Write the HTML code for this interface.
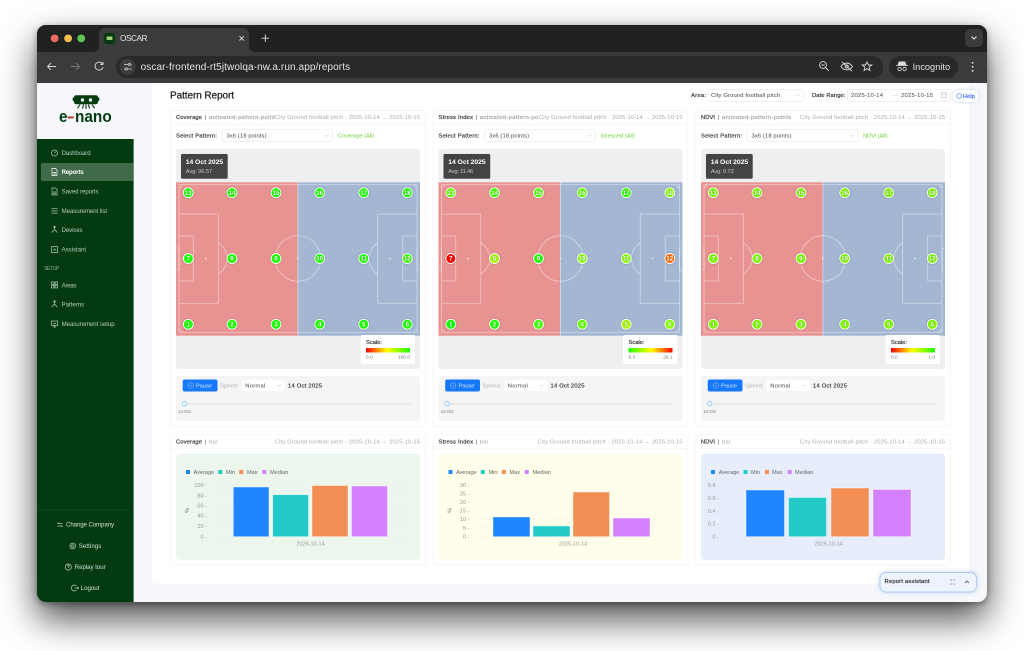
<!DOCTYPE html>
<html><head><meta charset="utf-8"><title>OSCAR</title>
<style>
html,body{margin:0;padding:0;background:#fff;width:1024px;height:651px;overflow:hidden}
#w{position:absolute;left:37px;top:25px;width:950px;height:577px;border-radius:9px;box-shadow:0 17px 36px rgba(0,0,0,.7),0 2px 7px rgba(0,0,0,.35);background:#202121}
svg{position:absolute;left:0;top:0;display:block;filter:blur(.25px)}
text{font-family:"Liberation Sans",sans-serif;font-size:5.8px;fill:#444}
.b{paint-order:stroke;stroke:#444;stroke-width:.22px}
.g{fill:#aaa}
.g.b{stroke:#aaa}
.n text{font-size:6.1px;fill:#b9ccbc}
.m text{font-size:6.1px;font-weight:bold;fill:#fff;text-anchor:middle;paint-order:stroke;stroke:rgba(0,60,0,.5);stroke-width:.4px}
.m circle{stroke:#fff;stroke-width:.9;filter:drop-shadow(0 .3px .7px rgba(0,0,0,.35))}
.ic{fill:none;stroke:#b9ccbc;stroke-width:.7}
.ax text{font-size:5.6px;fill:#999;text-anchor:end}
.lg text{font-size:5.6px;fill:#666}
</style></head><body>
<div id="w"></div>
<svg width="1024" height="651" viewBox="0 0 1024 651" xmlns="http://www.w3.org/2000/svg">
<defs>
<clipPath id="win"><rect x="37" y="25" width="950" height="577" rx="9"/></clipPath>
<linearGradient id="rg"><stop offset="0" stop-color="#f00"/><stop offset=".48" stop-color="#ff0"/><stop offset="1" stop-color="#1eff00"/></linearGradient>
<linearGradient id="gr"><stop offset="0" stop-color="#1eff00"/><stop offset=".52" stop-color="#ff0"/><stop offset="1" stop-color="#f00"/></linearGradient>
<g id="cardframe" fill="#fff">
<rect x="170.6" y="110.4" width="254.8" height="316.3" rx="3" stroke="#f2f2f2" stroke-width=".7"/>
<path d="M171 124.3H425" stroke="#f2f2f2" stroke-width=".7"/>
<rect x="222.2" y="129.5" width="110.5" height="12.2" rx="2" stroke="#e5e5e5" stroke-width=".6"/>
<path d="M325 134.7l1.8 1.9 1.8-1.9" fill="none" stroke="#bbb" stroke-width=".5"/>
<rect x="176" y="376" width="244" height="45" rx="3" fill="#f5f5f5"/>
<rect x="182.7" y="379.5" width="34.8" height="12" rx="2" fill="#1677ff"/>
<circle cx="190.7" cy="385.5" r="2.7" fill="none" stroke="#bcd8ff" stroke-width=".5"/>
<path d="M189.6 385.5h2.2" stroke="#bcd8ff" stroke-width=".5"/>
<rect x="241.7" y="380" width="43.3" height="11" rx="2"/>
<path d="M277.2 384.6l1.8 1.9 1.8-1.9" fill="none" stroke="#bbb" stroke-width=".5"/>
<rect x="184" y="403" width="227" height="1.6" rx=".8" fill="#e6e6e6"/>
<circle cx="184.6" cy="403.6" r="2.3" fill="#fff" stroke="#91caff" stroke-width="1"/>
<rect x="170.6" y="434.8" width="254.8" height="130.2" rx="3" stroke="#f2f2f2" stroke-width=".7"/>
<path d="M171 448.7H425" stroke="#f2f2f2" stroke-width=".7"/>
</g>
<g id="pitch">
<rect x="176" y="149" width="244" height="220" rx="3" fill="#efefef"/>
<rect x="176" y="182.3" width="121.7" height="153.4" fill="#e79391"/>
<rect x="297.7" y="182.3" width="122.3" height="153.4" fill="#a3b7d3"/>
<g fill="none" stroke="#fff" stroke-opacity=".5" stroke-width=".75">
<rect x="179" y="184.7" width="238" height="147.6"/>
<path d="M297.9 182.3V335.7"/>
<circle cx="297.9" cy="258.5" r="22.7"/>
<path d="M179 214H218.3V303.3H179M179 236H193.3V281H179M417 214H377.7V303.3H417M417 236H402.7V281H417"/>
<path d="M218.3 243A18 18 0 0 1 218.3 274M377.7 243A18 18 0 0 0 377.7 274"/>
<path d="M176.5 248H179V270H176.5M419.5 248H417V270H419.5"/>
<path d="M179 187.5A3 3 0 0 0 181.8 184.7M414.2 184.7A3 3 0 0 0 417 187.5M179 329.5A3 3 0 0 1 181.8 332.3M414.2 332.3A3 3 0 0 1 417 329.5"/>
</g>
<g fill="#fff" fill-opacity=".8"><circle cx="205.7" cy="258.5" r=".8"/><circle cx="390" cy="258.5" r=".8"/><circle cx="297.9" cy="258.5" r=".8"/></g>
<rect x="180.7" y="153.7" width="47.3" height="25.3" rx="1.5" fill="#444" stroke="#e8e8e8" stroke-width=".6"/>
<rect x="360.7" y="335" width="54.3" height="29" rx="1.5" fill="#fff"/>
</g>
</defs>

<g clip-path="url(#win)">
<!-- Browser chrome -->
<rect x="37" y="25" width="950" height="28" fill="#202121"/>
<circle cx="54.6" cy="38.4" r="3.9" fill="#ed6a5e"/><circle cx="68.1" cy="38.4" r="3.9" fill="#f4bf4f"/><circle cx="81.2" cy="38.4" r="3.9" fill="#61c554"/>
<path d="M92 52c5 0 7-2 7-6V34c0-4 3-6 6-6h138c3 0 6 2 6 6v12c0 4 2 6 7 6z" fill="#3a3b3b"/>
<rect x="37" y="52" width="950" height="31" fill="#3a3b3b"/>
<rect x="104" y="33" width="11" height="11" rx="3" fill="#033a10"/>
<rect x="106.5" y="36.5" width="6" height="3.5" rx="1" fill="#9fd27a"/>
<text x="120" y="41.200" style="font-size:8.300px;fill:#e4e4e4" textLength="27.5">OSCAR</text>
<path d="M239.5 36.2l4.3 4.3m0-4.3l-4.3 4.3" stroke="#ddd" stroke-width=".9"/>
<path d="M265.3 34.5v7.5m-3.7-3.8h7.4" stroke="#ddd" stroke-width=".9"/>
<rect x="965" y="29" width="18" height="18" rx="5" fill="#3a3b3b"/>
<path d="M971.6 36.6l2.4 2.4 2.4-2.4" fill="none" stroke="#eee" stroke-width="1"/>
<path d="M47.5 66.5h8.5M47.5 66.5l3.5-3.5M47.5 66.5l3.5 3.5" fill="none" stroke="#d8d8d8" stroke-width=".9"/>
<path d="M71 66.5h8.5M79.5 66.5l-3.5-3.5M79.5 66.5l-3.5 3.5" fill="none" stroke="#777" stroke-width=".9"/>
<path d="M102.5 64a4 4 0 1 0 .5 3M103 61.8v2.8h-2.8" fill="none" stroke="#d8d8d8" stroke-width=".9"/>
<rect x="116" y="56" width="767" height="22" rx="11" fill="#282929"/>
<circle cx="127.5" cy="66.8" r="8" fill="#3d3e3e"/>
<path d="M124 64.5h4.5M130.5 64.5h1M124 69h1M127.5 69h4" stroke="#ddd" stroke-width=".7"/>
<circle cx="129.5" cy="64.5" r="1.1" fill="none" stroke="#ddd" stroke-width=".7"/><circle cx="126.3" cy="69" r="1.1" fill="none" stroke="#ddd" stroke-width=".7"/>
<text x="140.6" y="70" style="font-size:10px;fill:#e3e3e3" textLength="209.5">oscar-frontend-rt5jtwolqa-nw.a.run.app/reports</text>
<g fill="none" stroke="#d8d8d8" stroke-width=".9">
<circle cx="823" cy="65" r="3.4"/><path d="M825.5 67.5l3.3 3.3M821.4 65h3.2"/>
<path d="M841 66.5c3-4.5 8.5-4.5 11.5 0-3 4.5-8.5 4.5-11.5 0zM842 61.8l10 9.5"/><circle cx="846.7" cy="66.5" r="1.6"/>
<path d="M867 62l1.4 3h3.3l-2.6 2.2.9 3.3-3-1.8-3 1.8.9-3.3-2.6-2.2h3.3z"/>
</g>
<rect x="889" y="56" width="69" height="22" rx="11" fill="#282929"/>
<path d="M898 65l1-3.2h6l1 3.2zM896 65.5h12" fill="#ddd" stroke="#ddd" stroke-width=".7"/>
<circle cx="899.6" cy="69" r="1.7" fill="none" stroke="#ddd" stroke-width=".8"/><circle cx="904.6" cy="69" r="1.7" fill="none" stroke="#ddd" stroke-width=".8"/>
<text x="912.6" y="70" style="font-size:9.200px;fill:#e3e3e3" textLength="37.5">Incognito</text>
<g fill="#ddd"><circle cx="972.6" cy="62.8" r=".95"/><circle cx="972.6" cy="66.8" r=".95"/><circle cx="972.6" cy="70.8" r=".95"/></g>

<!-- Page -->
<rect x="37" y="83" width="950" height="519" fill="#f5f7fb"/>
<rect x="37" y="139" width="96.6" height="463" fill="#033a10"/>
<rect x="152" y="83" width="817" height="500.5" rx="2" fill="#fff"/>

<!-- Logo -->
<g fill="#033a10">
<path d="M74 97.500c0-1.500 1-2.300 2-2.300h20c1 0 2 .8 2 2.300v4.500c0 1.300-1 2.200-2 2.200H76c-1 0-2-.9-2-2.200z"/>
<rect x="72.700" y="97.500" width="1.500" height="3.500"/><rect x="97.800" y="97.500" width="1.500" height="3.500"/>
<path d="M80 104.500l-2.500 3.800M83.500 104.500l-1 4M86 104.500v4.500M88.500 104.500l1 4M92 104.500l2.500 3.800" stroke="#033a10" stroke-width="1.100" fill="none"/>
</g>
<circle cx="82.500" cy="100" r="1.700" fill="#eef2ee"/><circle cx="90.500" cy="100" r="1.700" fill="#eef2ee"/>
<text x="59" y="122" style="font-size:17px;font-weight:bold;fill:#033a10" textLength="8.500" lengthAdjust="spacingAndGlyphs">e</text>
<rect x="67.700" y="116.500" width="6" height="1.900" fill="#a8352a"/>
<text x="75" y="122" style="font-size:17px;font-weight:bold;fill:#033a10" textLength="36.700" lengthAdjust="spacingAndGlyphs">nano</text>

<!-- Sidebar -->
<rect x="41" y="163" width="92.600" height="18" rx="1.500" fill="#3f6b4a"/>
<g class="n">
<text x="61.600" y="155" textLength="29">Dashboard</text>
<text x="61.600" y="174" textLength="22" style="fill:#fff;font-weight:bold">Reports</text>
<text x="61.600" y="193.500" textLength="37">Saved reports</text>
<text x="61.600" y="213" textLength="45.500">Measurement list</text>
<text x="61.600" y="232" textLength="21">Devices</text>
<text x="61.600" y="251.500" textLength="24.500">Assistant</text>
<text x="44" y="270" textLength="15.500" style="fill:#8ba98f;font-size:5.400px">SETUP</text>
<text x="61.600" y="287.500" textLength="15">Areas</text>
<text x="61.600" y="306.500" textLength="22.500">Patterns</text>
<text x="61.600" y="326" textLength="53">Measurement setup</text>
<text x="66" y="526.700" textLength="48" style="fill:#d3e0d5">Change Company</text>
<text x="78.700" y="547.900" textLength="22.600" style="fill:#d3e0d5">Settings</text>
<text x="74.700" y="569" textLength="31" style="fill:#d3e0d5">Replay tour</text>
<text x="80.700" y="590.100" textLength="18.600" style="fill:#d3e0d5">Logout</text>
</g>
<g class="ic">
<circle cx="54.500" cy="153" r="3"/><path d="M54.500 153l1.300-1.300"/>
<path d="M52 168.500h3.500l1.500 1.500v5.500h-5z" style="stroke:#fff"/><path d="M53 172.500h3M53 174h3" style="stroke:#fff"/>
<path d="M52 188h3.500l1.500 1.500v5.500h-5zM53 192h3M53 193.500h3"/>
<path d="M52 208.700h5.500M52 210.900h5.500M52 213.100h5.500M51 208.700h.5M51 210.900h.5M51 213.100h.5"/>
<path d="M54.500 226.500v3l-2.800 3M54.500 229.500l2.800 3"/><circle cx="54.500" cy="227" r=".8"/>
<rect x="51.500" y="246.500" width="6" height="6"/><path d="M53 250.500l1.500-1.500 1.500 1.500"/>
<rect x="51.500" y="282" width="2.500" height="2.500"/><rect x="55" y="282" width="2.500" height="2.500"/><rect x="51.500" y="285.500" width="2.500" height="2.500"/><rect x="55" y="285.500" width="2.500" height="2.500"/>
<path d="M54.500 301v3l-2.800 3M54.500 304l2.800 3"/><circle cx="54.500" cy="301.500" r=".8"/>
<rect x="51.300" y="321" width="6.400" height="4.500"/><path d="M54.500 325.500v1.500M53 327h3M53 323l1.500 1 1.500-1"/>
<path d="M57.500 523.500h5M58.500 522.500l-1 1M57.500 526h5M61.500 527l1-1"/>
<circle cx="72.700" cy="546" r="2.900"/><circle cx="72.700" cy="546" r="1.200"/>
<circle cx="68.300" cy="567" r="3.100"/><path d="M67.300 566.200c0-1.400 2-1.400 2 0 0 .8-1 .8-1 1.800M68.300 569v.3"/>
<path d="M76.500 585.800a3 3 0 1 0 0 4.400M74.500 588h4M77.300 586.800l1.200 1.200-1.200 1.200"/>
</g>
<path d="M37 510H133.600" stroke="#1d4d27" stroke-width=".6"/>

<!-- Header row -->
<text x="170" y="98.500" style="font-size:10px;fill:#222;stroke:#222;stroke-width:.25px" textLength="64">Pattern Report</text>
<text x="691" y="97" class="b" textLength="15">Area:</text>
<rect x="707.800" y="89.300" width="96" height="12" rx="2" fill="#fff" stroke="#e5e5e5" stroke-width=".6"/>
<text x="711" y="97.200" textLength="69">City Ground football pitch</text>
<path d="M796 94.200l1.800 1.900 1.800-1.900" fill="none" stroke="#bbb" stroke-width=".5"/>
<text x="812" y="97" class="b" textLength="33.500">Date Range:</text>
<rect x="847.500" y="89.300" width="103" height="12" rx="2" fill="#fff" stroke="#e5e5e5" stroke-width=".6"/>
<text x="851" y="97.200" textLength="32">2025-10-14</text>
<text x="901" y="97.200" textLength="32">2025-10-15</text>
<path d="M893 95.300h4l-1-.8m1 .8l-1 .8" fill="none" stroke="#ccc" stroke-width=".5"/>
<rect x="941.500" y="92.700" width="5" height="5" fill="none" stroke="#bbb" stroke-width=".5"/><path d="M941.500 94.300h5" stroke="#bbb" stroke-width=".5"/>
<rect x="953" y="90" width="26" height="12" rx="6" fill="#fff" style="filter:drop-shadow(0 .6px 1.500px rgba(60,90,180,.3))"/>
<circle cx="959" cy="96" r="2.400" fill="none" stroke="#3b6cf6" stroke-width=".6"/>
<text x="962.800" y="98" style="fill:#3b6cf6;stroke:#3b6cf6;stroke-width:.2px" textLength="12">Help</text>

<!-- Card 1 -->
<use href="#cardframe"/><use href="#pitch"/>
<g>
<text x="176" y="119" class="b" textLength="26">Coverage</text><text x="205" y="119" fill="#888">|</text>
<text x="209" y="119" class="g b" textLength="66">animated-pattern-point</text>
<text x="275" y="119" class="g" textLength="145">City Ground football pitch · 2025-10-14 → 2025-10-15</text>
<text x="176" y="137.500" class="b" textLength="41">Select Pattern:</text>
<text x="226.500" y="137.700" textLength="40">3x6 (18 points)</text>
<text x="338" y="137.500" style="fill:#73d13d" textLength="36">Coverage (All)</text>
<text x="185.700" y="164" style="font-size:6.800px;font-weight:bold;fill:#fff" textLength="37.500">14 Oct 2025</text>
<text x="185.700" y="173" style="fill:#c4c4c4" textLength="26.500">Avg: 96.57</text>
<text x="366" y="344" class="b" textLength="16">Scale:</text>
<rect x="366" y="348" width="44" height="4.500" fill="url(#rg)"/>
<text x="366" y="358.500" style="font-size:4.800px;fill:#777">0.0</text><text x="410" y="358.500" text-anchor="end" style="font-size:4.800px;fill:#777">100.0</text>
<text x="196" y="387.500" style="fill:#cfe2ff" textLength="16">Pause</text>
<text x="220" y="387.500" style="fill:#b5b5b5" textLength="19">Speed:</text>
<text x="245.300" y="387.300" textLength="20">Normal</text>
<text x="288" y="387.500" class="b" textLength="34">14 Oct 2025</text>
<text x="178.300" y="413" style="font-size:4.500px;fill:#777" textLength="12.500">14 Oct</text>
<g class="m">
<circle cx="188.300" cy="192.700" r="5" fill="#1eff00"/><text x="188.300" y="194.900">13</text>
<circle cx="232" cy="192.700" r="5" fill="#1eff00"/><text x="232" y="194.900">14</text>
<circle cx="276" cy="192.700" r="5" fill="#1eff00"/><text x="276" y="194.900">15</text>
<circle cx="319.700" cy="192.700" r="5" fill="#1eff00"/><text x="319.700" y="194.900">16</text>
<circle cx="363.700" cy="192.700" r="5" fill="#1eff00"/><text x="363.700" y="194.900">17</text>
<circle cx="407.300" cy="192.700" r="5" fill="#1eff00"/><text x="407.300" y="194.900">18</text>
<circle cx="188.300" cy="258.500" r="5" fill="#1eff00"/><text x="188.300" y="260.700">7</text>
<circle cx="232" cy="258.500" r="5" fill="#1eff00"/><text x="232" y="260.700">8</text>
<circle cx="276" cy="258.500" r="5" fill="#1eff00"/><text x="276" y="260.700">9</text>
<circle cx="319.700" cy="258.500" r="5" fill="#1eff00"/><text x="319.700" y="260.700">10</text>
<circle cx="363.700" cy="258.500" r="5" fill="#1eff00"/><text x="363.700" y="260.700">11</text>
<circle cx="407.300" cy="258.500" r="5" fill="#3dff00"/><text x="407.300" y="260.700">12</text>
<circle cx="188.300" cy="324.300" r="5" fill="#1eff00"/><text x="188.300" y="326.500">1</text>
<circle cx="232" cy="324.300" r="5" fill="#1eff00"/><text x="232" y="326.500">2</text>
<circle cx="276" cy="324.300" r="5" fill="#1eff00"/><text x="276" y="326.500">3</text>
<circle cx="319.700" cy="324.300" r="5" fill="#1eff00"/><text x="319.700" y="326.500">4</text>
<circle cx="363.700" cy="324.300" r="5" fill="#1eff00"/><text x="363.700" y="326.500">5</text>
<circle cx="407.300" cy="324.300" r="5" fill="#1eff00"/><text x="407.300" y="326.500">6</text>
</g>
<!-- Coverage bar -->
<text x="176" y="443.500" class="b" textLength="26">Coverage</text><text x="205" y="443.500" fill="#888">|</text><text x="209" y="443.500" class="g" textLength="9">bar</text>
<text x="275" y="443.500" class="g" textLength="145">City Ground football pitch · 2025-10-14 → 2025-10-15</text>
<rect x="176" y="453.700" width="244" height="106.300" rx="4" fill="#edf6ec"/>
<g class="lg">
<rect x="186" y="470" width="4" height="4" fill="#1f86ff"/><text x="193.500" y="474">Average</text>
<rect x="218.300" y="470" width="4" height="4" fill="#22cbc7"/><text x="226" y="474">Min</text>
<rect x="239.300" y="470" width="4" height="4" fill="#f38f54"/><text x="247" y="474">Max</text>
<rect x="262.300" y="470" width="4" height="4" fill="#d481ff"/><text x="270" y="474">Median</text>
</g>
<g class="ax"><text x="207" y="487">100 -</text><text x="207" y="497.300">80 -</text><text x="207" y="507.300">60 -</text><text x="207" y="517.700">40 -</text><text x="207" y="528">20 -</text><text x="207" y="538.300">0 -</text></g>
<path d="M212 485H410M212 495.300H410M212 505.300H410M212 515.700H410M212 526H410M212 536.300H410" stroke="#dfe6dd" stroke-width=".5" stroke-dasharray="1 1.500"/>
<text x="0" y="0" transform="translate(189,513) rotate(-90)" style="font-size:5.500px;fill:#666">%</text>
<g stroke="#fff" stroke-opacity=".6" stroke-width=".7">
<rect x="233.300" y="487" width="35.700" height="49.700" fill="#1f86ff"/><rect x="272.700" y="494.700" width="35.800" height="42" fill="#22cbc7"/><rect x="312" y="485.500" width="36" height="51.200" fill="#f38f54"/><rect x="351.500" y="486" width="36" height="50.700" fill="#d481ff"/>
</g>
<text x="310.500" y="545.500" text-anchor="middle" style="font-size:5.500px;fill:#999">2025-10-14</text>
</g>

<!-- Card 2 -->
<g transform="translate(262.500,0)"><use href="#cardframe"/><use href="#pitch"/>
<text x="176" y="119" class="b" textLength="34.500">Stress Index</text><text x="213" y="119" fill="#888">|</text>
<text x="217.200" y="119" class="g b" textLength="58.500">animated-pattern-po</text>
<text x="276.500" y="119" class="g" textLength="143.500">City Ground football pitch · 2025-10-14 → 2025-10-15</text>
<text x="176" y="137.500" class="b" textLength="41">Select Pattern:</text>
<text x="226.500" y="137.700" textLength="40">3x6 (18 points)</text>
<text x="338" y="137.500" style="fill:#73d13d" textLength="34.500">Stressed (All)</text>
<text x="185.700" y="164" style="font-size:6.800px;font-weight:bold;fill:#fff" textLength="37.500">14 Oct 2025</text>
<text x="185.700" y="173" style="fill:#c4c4c4" textLength="25">Avg: 11.46</text>
<text x="366" y="344" class="b" textLength="16">Scale:</text>
<rect x="366" y="348" width="44" height="4.500" fill="url(#gr)"/>
<text x="366" y="358.500" style="font-size:4.800px;fill:#777">6.3</text><text x="410" y="358.500" text-anchor="end" style="font-size:4.800px;fill:#777">26.1</text>
<text x="196" y="387.500" style="fill:#cfe2ff" textLength="16">Pause</text>
<text x="220" y="387.500" style="fill:#b5b5b5" textLength="19">Speed:</text>
<text x="245.300" y="387.300" textLength="20">Normal</text>
<text x="288" y="387.500" class="b" textLength="34">14 Oct 2025</text>
<text x="178.300" y="413" style="font-size:4.500px;fill:#777" textLength="12.500">14 Oct</text>
<g class="m">
<circle cx="188.300" cy="192.700" r="5" fill="#66ff00"/><text x="188.300" y="194.900">13</text>
<circle cx="232" cy="192.700" r="5" fill="#44ff00"/><text x="232" y="194.900">14</text>
<circle cx="276" cy="192.700" r="5" fill="#55ff00"/><text x="276" y="194.900">15</text>
<circle cx="319.700" cy="192.700" r="5" fill="#66ff00"/><text x="319.700" y="194.900">16</text>
<circle cx="363.700" cy="192.700" r="5" fill="#33ff00"/><text x="363.700" y="194.900">17</text>
<circle cx="407.300" cy="192.700" r="5" fill="#88ff00"/><text x="407.300" y="194.900">18</text>
<circle cx="188.300" cy="258.500" r="5" fill="#f00"/><text x="188.300" y="260.700">7</text>
<circle cx="232" cy="258.500" r="5" fill="#aaf500"/><text x="232" y="260.700">8</text>
<circle cx="276" cy="258.500" r="5" fill="#22ff00"/><text x="276" y="260.700">9</text>
<circle cx="319.700" cy="258.500" r="5" fill="#88ff00"/><text x="319.700" y="260.700">10</text>
<circle cx="363.700" cy="258.500" r="5" fill="#88ff00"/><text x="363.700" y="260.700">11</text>
<circle cx="407.300" cy="258.500" r="5" fill="#ff6a00"/><text x="407.300" y="260.700">12</text>
<circle cx="188.300" cy="324.300" r="5" fill="#11ff00"/><text x="188.300" y="326.500">1</text>
<circle cx="232" cy="324.300" r="5" fill="#22ff00"/><text x="232" y="326.500">2</text>
<circle cx="276" cy="324.300" r="5" fill="#44ff00"/><text x="276" y="326.500">3</text>
<circle cx="319.700" cy="324.300" r="5" fill="#66ff00"/><text x="319.700" y="326.500">4</text>
<circle cx="363.700" cy="324.300" r="5" fill="#aaf500"/><text x="363.700" y="326.500">5</text>
<circle cx="407.300" cy="324.300" r="5" fill="#88ff00"/><text x="407.300" y="326.500">6</text>
</g>
<text x="176" y="443.500" class="b" textLength="34.500">Stress Index</text><text x="213" y="443.500" fill="#888">|</text><text x="217.200" y="443.500" class="g" textLength="9">bar</text>
<text x="275" y="443.500" class="g" textLength="145">City Ground football pitch · 2025-10-14 → 2025-10-15</text>
<rect x="176" y="453.700" width="244" height="106.300" rx="4" fill="#fefeea"/>
<g class="lg">
<rect x="186" y="470" width="4" height="4" fill="#1f86ff"/><text x="193.500" y="474">Average</text>
<rect x="218.300" y="470" width="4" height="4" fill="#22cbc7"/><text x="226" y="474">Min</text>
<rect x="239.300" y="470" width="4" height="4" fill="#f38f54"/><text x="247" y="474">Max</text>
<rect x="262.300" y="470" width="4" height="4" fill="#d481ff"/><text x="270" y="474">Median</text>
</g>
<g class="ax"><text x="207" y="487">30 -</text><text x="207" y="495.500">25 -</text><text x="207" y="504">20 -</text><text x="207" y="512.500">15 -</text><text x="207" y="521">10 -</text><text x="207" y="529.800">5 -</text><text x="207" y="538.300">0 -</text></g>
<path d="M212 485H410M212 493.500H410M212 502H410M212 510.500H410M212 519H410M212 527.800H410M212 536.300H410" stroke="#e6e6d4" stroke-width=".5" stroke-dasharray="1 1.500"/>
<text x="0" y="0" transform="translate(189,513) rotate(-90)" style="font-size:5.500px;fill:#666">%</text>
<g stroke="#fff" stroke-opacity=".6" stroke-width=".7">
<rect x="230.500" y="517" width="37" height="19.700" fill="#1f86ff"/><rect x="270.500" y="526" width="37" height="10.700" fill="#22cbc7"/><rect x="310.500" y="492" width="36.500" height="44.700" fill="#f38f54"/><rect x="350.500" y="518" width="37" height="18.700" fill="#d481ff"/>
</g>
<text x="310.500" y="545.500" text-anchor="middle" style="font-size:5.500px;fill:#999">2025-10-14</text>
</g>

<!-- Card 3 -->
<g transform="translate(525,0)"><use href="#cardframe"/><use href="#pitch"/>
<text x="176" y="119" class="b" textLength="14">NDVI</text><text x="193" y="119" fill="#888">|</text>
<text x="197" y="119" class="g b" textLength="69">animated-pattern-points</text>
<text x="275" y="119" class="g" textLength="145">City Ground football pitch · 2025-10-14 → 2025-10-15</text>
<text x="176" y="137.500" class="b" textLength="41">Select Pattern:</text>
<text x="226.500" y="137.700" textLength="40">3x6 (18 points)</text>
<text x="338" y="137.500" style="fill:#73d13d" textLength="24.500">NDVI (All)</text>
<text x="185.700" y="164" style="font-size:6.800px;font-weight:bold;fill:#fff" textLength="37.500">14 Oct 2025</text>
<text x="185.700" y="173" style="fill:#c4c4c4" textLength="23">Avg: 0.73</text>
<text x="366" y="344" class="b" textLength="16">Scale:</text>
<rect x="366" y="348" width="44" height="4.500" fill="url(#rg)"/>
<text x="366" y="358.500" style="font-size:4.800px;fill:#777">0.0</text><text x="410" y="358.500" text-anchor="end" style="font-size:4.800px;fill:#777">1.0</text>
<text x="196" y="387.500" style="fill:#cfe2ff" textLength="16">Pause</text>
<text x="220" y="387.500" style="fill:#b5b5b5" textLength="19">Speed:</text>
<text x="245.300" y="387.300" textLength="20">Normal</text>
<text x="288" y="387.500" class="b" textLength="34">14 Oct 2025</text>
<text x="178.300" y="413" style="font-size:4.500px;fill:#777" textLength="12.500">14 Oct</text>
<g class="m">
<circle cx="188.300" cy="192.700" r="5" fill="#80f500"/><text x="188.300" y="194.900">13</text>
<circle cx="232" cy="192.700" r="5" fill="#80f500"/><text x="232" y="194.900">14</text>
<circle cx="276" cy="192.700" r="5" fill="#80f500"/><text x="276" y="194.900">15</text>
<circle cx="319.700" cy="192.700" r="5" fill="#80f500"/><text x="319.700" y="194.900">16</text>
<circle cx="363.700" cy="192.700" r="5" fill="#80f500"/><text x="363.700" y="194.900">17</text>
<circle cx="407.300" cy="192.700" r="5" fill="#80f500"/><text x="407.300" y="194.900">18</text>
<circle cx="188.300" cy="258.500" r="5" fill="#80f500"/><text x="188.300" y="260.700">7</text>
<circle cx="232" cy="258.500" r="5" fill="#80f500"/><text x="232" y="260.700">8</text>
<circle cx="276" cy="258.500" r="5" fill="#80f500"/><text x="276" y="260.700">9</text>
<circle cx="319.700" cy="258.500" r="5" fill="#80f500"/><text x="319.700" y="260.700">10</text>
<circle cx="363.700" cy="258.500" r="5" fill="#80f500"/><text x="363.700" y="260.700">11</text>
<circle cx="407.300" cy="258.500" r="5" fill="#80f500"/><text x="407.300" y="260.700">12</text>
<circle cx="188.300" cy="324.300" r="5" fill="#80f500"/><text x="188.300" y="326.500">1</text>
<circle cx="232" cy="324.300" r="5" fill="#80f500"/><text x="232" y="326.500">2</text>
<circle cx="276" cy="324.300" r="5" fill="#80f500"/><text x="276" y="326.500">3</text>
<circle cx="319.700" cy="324.300" r="5" fill="#80f500"/><text x="319.700" y="326.500">4</text>
<circle cx="363.700" cy="324.300" r="5" fill="#80f500"/><text x="363.700" y="326.500">5</text>
<circle cx="407.300" cy="324.300" r="5" fill="#80f500"/><text x="407.300" y="326.500">6</text>
</g>
<text x="176" y="443.500" class="b" textLength="14">NDVI</text><text x="193" y="443.500" fill="#888">|</text><text x="197" y="443.500" class="g" textLength="9">bar</text>
<text x="275" y="443.500" class="g" textLength="145">City Ground football pitch · 2025-10-14 → 2025-10-15</text>
<rect x="176" y="453.700" width="244" height="106.300" rx="4" fill="#e8edfb"/>
<g class="lg">
<rect x="186" y="470" width="4" height="4" fill="#1f86ff"/><text x="193.700" y="474">Average</text>
<rect x="218.500" y="470" width="4" height="4" fill="#22cbc7"/><text x="226" y="474">Min</text>
<rect x="240" y="470" width="4" height="4" fill="#f38f54"/><text x="247" y="474">Max</text>
<rect x="262.700" y="470" width="4" height="4" fill="#d481ff"/><text x="270" y="474">Median</text>
</g>
<g class="ax"><text x="194" y="487">0.8 -</text><text x="194" y="500">0.6 -</text><text x="194" y="513">0.4 -</text><text x="194" y="525.500">0.2 -</text><text x="194" y="538.300">0 -</text></g>
<path d="M200 485H410M200 498H410M200 511H410M200 523.500H410M200 536.300H410" stroke="#d9dfee" stroke-width=".5" stroke-dasharray="1 1.500"/>
<g stroke="#fff" stroke-opacity=".6" stroke-width=".7">
<rect x="221" y="490" width="38.500" height="46.700" fill="#1f86ff"/><rect x="263.500" y="497.500" width="38" height="39.200" fill="#22cbc7"/><rect x="306" y="488" width="38" height="48.700" fill="#f38f54"/><rect x="348" y="489.500" width="38" height="47.200" fill="#d481ff"/>
</g>
<text x="303.700" y="545.500" text-anchor="middle" style="font-size:5.500px;fill:#999">2025-10-14</text>
</g>

<!-- Report assistant -->
<rect x="880" y="572.500" width="96.500" height="19.500" rx="6" fill="#eef4ff" stroke="#a9c8f5" stroke-width=".9" style="filter:drop-shadow(0 0 2.500px rgba(90,120,200,.3))"/>
<text x="884.500" y="583" class="b" style="fill:#333" textLength="45">Report assistant</text>
<path d="M950.500 579.500l1 1M954.500 579.500l-1 1M950.500 584.500l1-1M954.500 584.500l-1-1" stroke="#555" stroke-width=".7"/>
<path d="M965 583l2-2 2 2" fill="none" stroke="#444" stroke-width=".8"/>
</g>
</svg>
</body></html>
